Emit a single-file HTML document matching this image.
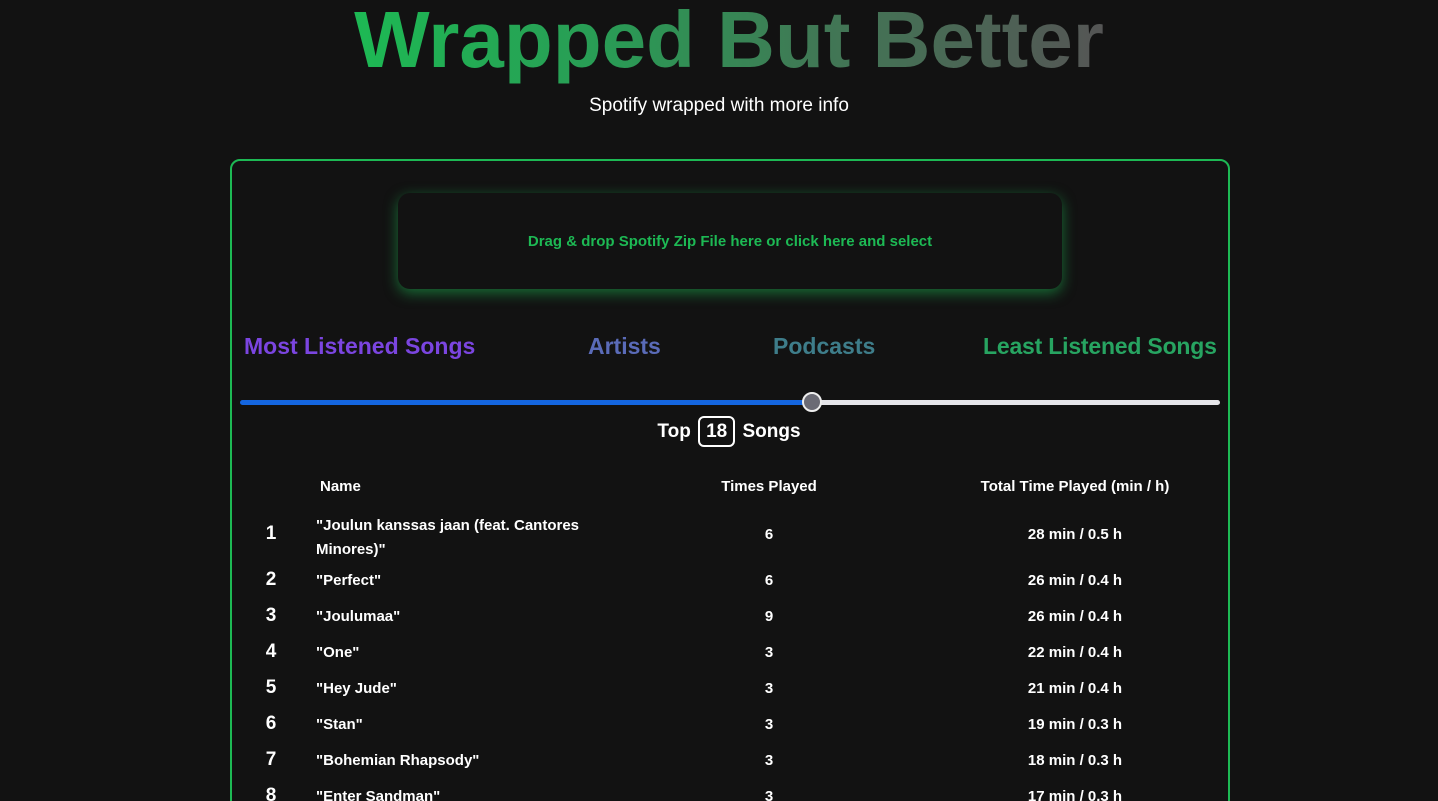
<!DOCTYPE html>
<html><head><meta charset="utf-8"><style>
*{margin:0;padding:0;box-sizing:border-box}
html,body{width:1438px;height:801px;overflow:hidden}
body{background:#121212;font-family:"Liberation Sans",sans-serif;color:#fff;position:relative}
.t{position:absolute;left:10px;width:1438px;text-align:center;top:-6px}
.t span{display:inline-block;font-size:80px;font-weight:bold;letter-spacing:0;background:linear-gradient(90deg,#1db954,#2a9a55 35%,#3f7a55 60%,#555 100%);-webkit-background-clip:text;background-clip:text;color:transparent;line-height:92px}
.sub{position:absolute;top:95px;width:1438px;text-align:center;font-size:19px}
.box{position:absolute;left:230px;top:159px;width:1000px;height:700px;border:2px solid #1db954;border-radius:10px}
.drop{position:absolute;left:398px;top:193px;width:664px;height:96px;border-radius:12px;background:#121212;box-shadow:0 4px 14px rgba(29,185,84,.55);color:#1db954;font-weight:bold;font-size:15px;text-align:center;line-height:98px}
.tab{position:absolute;top:333px;font-size:23px;font-weight:bold;}
.track{position:absolute;top:400px;height:5px;border-radius:3px}
.knob{position:absolute;left:802px;top:392px;width:20px;height:20px;border-radius:50%;background:#6b6b75;border:2px solid #eee}
.top{position:absolute;top:416px;left:0;width:1438px;text-align:center;font-size:19px;font-weight:bold;padding-left:20px}
.top b{display:inline-block;border:2px solid #fff;border-radius:6px;padding:0 6px;line-height:27px;margin:0 2px}
.c{position:absolute;font-size:15px;font-weight:bold}
.r{position:absolute;font-size:19px;font-weight:bold;width:30px;text-align:center;left:256px}
.m{position:absolute;width:200px;text-align:center;font-size:15px;font-weight:bold}
</style></head><body>
<div class="t"><span>Wrapped But Better</span></div>
<div class="sub">Spotify wrapped with more info</div>
<div class="box"></div>
<div class="drop">Drag &amp; drop Spotify Zip File here or click here and select</div>
<div class="tab" style="left:244px;color:#7b45e0">Most Listened Songs</div>
<div class="tab" style="left:588px;color:#5a6bb8">Artists</div>
<div class="tab" style="left:773px;color:#3e7d8a">Podcasts</div>
<div class="tab" style="left:983px;color:#27a461;letter-spacing:-0.2px">Least Listened Songs</div>
<div class="track" style="left:240px;width:570px;background:#1466e0"></div>
<div class="track" style="left:810px;width:410px;background:#e6e6ea"></div>
<div class="knob"></div>
<div class="top">Top <b>18</b> Songs</div>
<div class="c" style="left:320px;top:478px">Name</div>
<div class="m" style="left:669px;top:478px">Times Played</div>
<div class="m" style="left:925px;top:478px;width:300px">Total Time Played (min / h)</div>
<div class="r" style="top:523px">1</div><div class="c" style="left:316px;top:514px;line-height:24px">"Joulun kanssas jaan (feat. Cantores<br>Minores)"</div><div class="m" style="left:669px;top:526px">6</div><div class="m" style="left:975px;top:526px">28 min / 0.5 h</div>
<div class="r" style="top:569px">2</div><div class="c" style="left:316px;top:572px">"Perfect"</div><div class="m" style="left:669px;top:572px">6</div><div class="m" style="left:975px;top:572px">26 min / 0.4 h</div>
<div class="r" style="top:605px">3</div><div class="c" style="left:316px;top:608px">"Joulumaa"</div><div class="m" style="left:669px;top:608px">9</div><div class="m" style="left:975px;top:608px">26 min / 0.4 h</div>
<div class="r" style="top:641px">4</div><div class="c" style="left:316px;top:644px">"One"</div><div class="m" style="left:669px;top:644px">3</div><div class="m" style="left:975px;top:644px">22 min / 0.4 h</div>
<div class="r" style="top:677px">5</div><div class="c" style="left:316px;top:680px">"Hey Jude"</div><div class="m" style="left:669px;top:680px">3</div><div class="m" style="left:975px;top:680px">21 min / 0.4 h</div>
<div class="r" style="top:713px">6</div><div class="c" style="left:316px;top:716px">"Stan"</div><div class="m" style="left:669px;top:716px">3</div><div class="m" style="left:975px;top:716px">19 min / 0.3 h</div>
<div class="r" style="top:749px">7</div><div class="c" style="left:316px;top:752px">"Bohemian Rhapsody"</div><div class="m" style="left:669px;top:752px">3</div><div class="m" style="left:975px;top:752px">18 min / 0.3 h</div>
<div class="r" style="top:785px">8</div><div class="c" style="left:316px;top:788px">"Enter Sandman"</div><div class="m" style="left:669px;top:788px">3</div><div class="m" style="left:975px;top:788px">17 min / 0.3 h</div>
</body></html>
